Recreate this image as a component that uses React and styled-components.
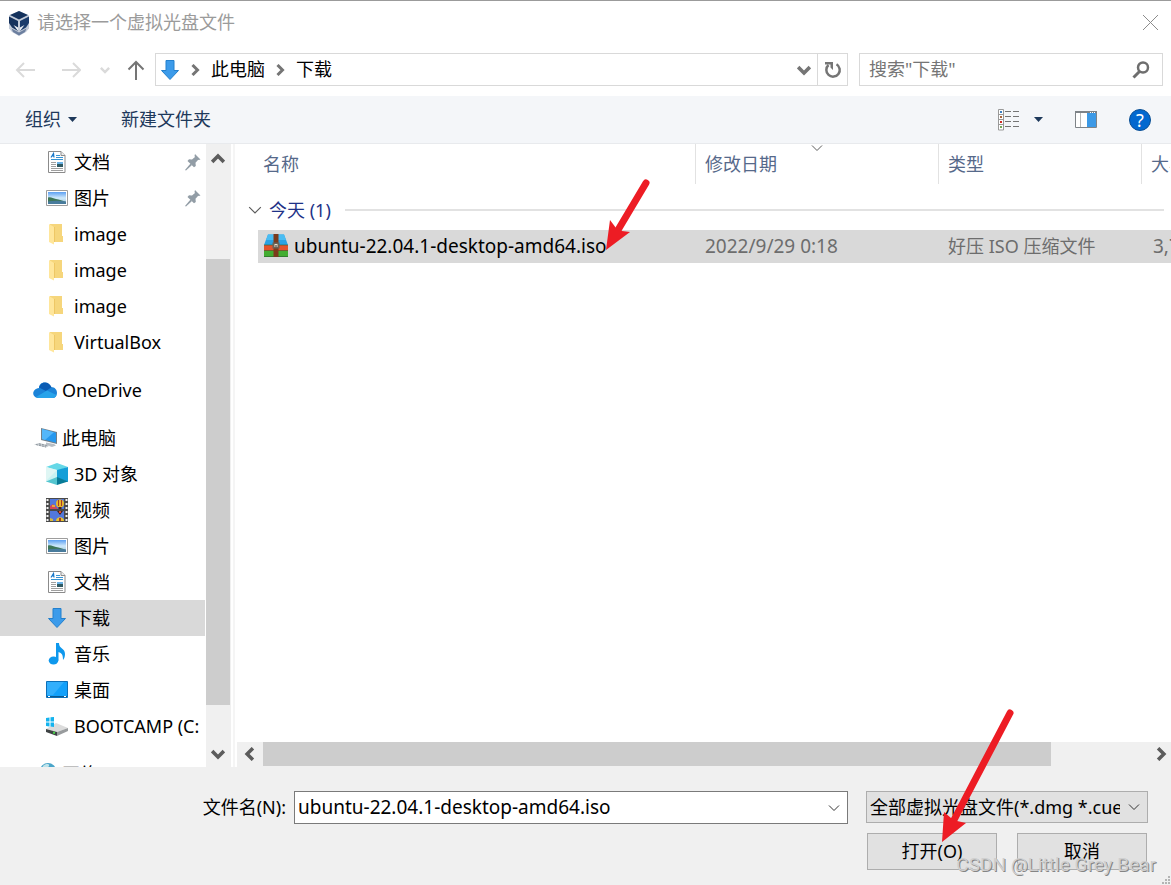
import React from "react";
import styled, { createGlobalStyle, css } from "styled-components";

const GlobalStyle = createGlobalStyle`
  *, *::before, *::after { box-sizing: border-box; }
  html, body { margin: 0; padding: 0; }
  body, button, input, select {
    font-family: "Noto Sans", "Noto Sans CJK SC", sans-serif;
    font-size: 18px;
    line-height: 24px;
    color: #000;
  }
  button { border: 0; padding: 0; background: none; cursor: default; }
  svg { display: block; flex: none; }
`;

/* ---------- window frame ---------- */

const Window = styled.div`
  display: flex;
  flex-direction: column;
  height: 100vh;
  overflow: hidden;
  border-top: 1px solid #9b9b9b;
  background: #fff;
`;

const TitleBar = styled.header`
  display: flex;
  align-items: center;
  gap: 7px;
  height: 43px;
  padding: 0 12px 0 8px;
  flex: none;
`;

const Title = styled.h1`
  flex: 1;
  margin: 0;
  padding-bottom: 1px;
  font-size: 18px;
  font-weight: 400;
  color: #9b9b9b;
`;

const IconButton = styled.button`
  display: flex;
  align-items: center;
  justify-content: center;
  flex: none;
`;

/* ---------- navigation ---------- */

const NavBar = styled.nav`
  display: flex;
  align-items: center;
  padding: 9px 8px 10px 15px;
  flex: none;
`;

const History = styled.div`
  display: flex;
  align-items: center;
  width: 140px;
  flex: none;
`;

const HistoryButton = styled(IconButton)`
  width: ${(p) => p.$width}px;
  justify-content: flex-start;
`;

const AddressBar = styled.div`
  display: flex;
  align-items: center;
  flex: 1;
  height: 33px;
  margin-right: 11px;
  padding-left: 2px;
  border: 1px solid #d9d9d9;
`;

const Crumb = styled.button`
  margin: 0 9px 0 10px;
  padding-bottom: 1px;
`;

const Place = styled(IconButton)`
  margin-right: 7px;
`;

const AddressDrop = styled(IconButton)`
  width: 27px;
  height: 31px;
  margin-left: auto;
`;

const Refresh = styled(IconButton)`
  width: 30px;
  height: 31px;
  border-left: 1px solid #d9d9d9;
`;

const SearchBox = styled.label`
  display: flex;
  align-items: center;
  width: 304px;
  height: 33px;
  padding: 0 12px 0 9px;
  border: 1px solid #d9d9d9;
`;

const SearchInput = styled.input`
  flex: 1;
  min-width: 0;
  padding: 0 0 1px;
  border: 0;
  outline: 0;
  background: none;
  &::placeholder { color: #757575; opacity: 1; }
`;

/* ---------- command bar ---------- */

const CommandBar = styled.div`
  display: flex;
  align-items: center;
  height: 48px;
  padding: 0 20px 0 25px;
  background: #f4f6f9;
  border-bottom: 1px solid #e8eaed;
  flex: none;
`;

const Command = styled.button`
  display: flex;
  align-items: center;
  gap: 7px;
  margin-right: 44px;
  padding-bottom: 1px;
  color: #1e395b;
`;

const ViewTools = styled.div`
  display: flex;
  align-items: center;
  margin-left: auto;
`;

const HelpButton = styled(IconButton)`
  width: 22px;
  height: 22px;
  margin-left: 32px;
  border: 1px solid #0a4f94;
  border-radius: 50%;
  background: #0268cf;
  color: #fff;
`;

const ViewButton = styled(IconButton)`
  gap: 14px;
  margin-right: 32px;
`;

/* ---------- body ---------- */

const Body = styled.div`
  display: flex;
  flex: 1;
  min-height: 0;
`;

const Tree = styled.ul`
  width: 206px;
  margin: 0;
  padding: 0;
  overflow: hidden;
  list-style: none;
  flex: none;
`;

const TreeRow = styled.li`
  display: flex;
  align-items: center;
  gap: 5px;
  height: 36px;
  margin-top: ${(p) => (p.$root ? 12 : 0)}px;
  margin-right: 1px;
  padding-left: ${(p) => (p.$root ? 33 : 45)}px;
  padding-right: 4px;
  white-space: nowrap;
  ${(p) => p.$selected && css`background: #d9d9d9;`}
`;

const TreeLabel = styled.span`
  flex: 1;
`;

const ScrollTrack = styled.div`
  display: flex;
  background: #f0f0f0;
  flex: none;
  ${(p) =>
    p.$horizontal
      ? css`
          height: 25px;
          border-bottom: 1px solid #f0f0f0;
        `
      : css`
          flex-direction: column;
          width: 25px;
          border-right: 1px solid #f0f0f0;
        `}
`;

const ScrollButton = styled(IconButton)`
  width: ${(p) => (p.$horizontal ? `${p.$length}px` : "auto")};
  height: ${(p) => (p.$horizontal ? "auto" : `${p.$length}px`)};
`;

const ScrollSpace = styled.div`
  flex: ${(p) => p.$grow} 1 0;
  background: ${(p) => (p.$thumb ? "#cdcdcd" : "transparent")};
`;

const Splitter = styled.div`
  width: 6px;
  border-left: 2px solid #fff;
  border-right: 2px solid #fff;
  background: #f5f5f5;
  flex: none;
`;

const FilePane = styled.main`
  display: flex;
  flex-direction: column;
  flex: 1;
  min-width: 0;
`;

const FileArea = styled.div`
  flex: 1;
  min-height: 0;
  overflow: hidden;
`;

const FileTable = styled.table`
  width: 100%;
  table-layout: fixed;
  border-collapse: separate;
  border-spacing: 0;
`;

const Col = styled.col`
  width: ${(p) => p.$width};
`;

const HeadCell = styled.th`
  position: relative;
  height: 40px;
  padding: 0 0 0 ${(p) => p.$pad || 9}px;
  overflow: hidden;
  border-right: 1px solid ${(p) => (p.$line ? "#e2e2e2" : "transparent")};
  text-align: left;
  white-space: nowrap;
  font-weight: 400;
  color: #56698a;
`;

const SortMark = styled.span`
  position: absolute;
  top: -2px;
  left: 50%;
  margin-left: -6px;
`;

const GroupCell = styled.th`
  height: 46px;
  padding: 5px 7px 0 11px;
  text-align: left;
  font-weight: 400;
  color: #1e3287;
`;

const GroupTitle = styled.div`
  display: flex;
  align-items: center;
  gap: 7px;
  &::after {
    content: "";
    flex: 1;
    height: 2px;
    margin-left: 7px;
    background: #e2e2e2;
  }
`;

const Cell = styled.td`
  height: 33px;
  padding: 0 0 1px ${(p) => p.$pad || 9}px;
  overflow: ${(p) => (p.$main ? "visible" : "hidden")};
  background: #d9d9d9;
  white-space: nowrap;
  font-size: ${(p) => (p.$wide ? 19 : 18)}px;
  color: ${(p) => (p.$main ? "#000" : "#6d6d6d")};
`;

const Gutter = styled.td`
  padding: 0;
`;

const FileName = styled.span`
  position: relative;
  display: inline-flex;
  align-items: center;
  gap: 5px;
  vertical-align: top;
  height: 32px;
`;

const RowArrow = styled.svg`
  position: absolute;
  left: 340px;
  top: -56px;
  pointer-events: none;
`;

/* ---------- footer ---------- */

const Footer = styled.form`
  position: relative;
  display: flex;
  flex-direction: column;
  gap: 9px;
  height: 118px;
  padding: 24px 23px 0 0;
  background: #f0f0f0;
  flex: none;
`;

const FieldRow = styled.div`
  display: flex;
  align-items: flex-start;
`;

const FieldLabel = styled.label`
  width: 294px;
  padding-right: 8px;
  line-height: 33px;
  text-align: right;
  flex: none;
`;

const NameField = styled.div`
  display: flex;
  flex: 1;
  height: 33px;
  margin-right: 18px;
  border: 1px solid #7a7a7a;
  background: #fff;
`;

const NameInput = styled.input`
  flex: 1;
  min-width: 0;
  padding: 0 0 2px 3px;
  border: 0;
  outline: 0;
  background: none;
  font-size: 19px;
`;

const DropButton = styled(IconButton)`
  width: 26px;
`;

const TypeField = styled.div`
  position: relative;
  width: 282px;
`;

const TypeSelect = styled.select`
  display: block;
  width: 100%;
  height: 32px;
  padding: 0 27px 0 3px;
  border: 1px solid #adadad;
  border-radius: 0;
  background: #e1e1e1;
  appearance: none;
  overflow: hidden;
`;

const TypeMark = styled.span`
  position: absolute;
  top: 10px;
  right: 8px;
  pointer-events: none;
`;

const Actions = styled.div`
  display: flex;
  justify-content: flex-end;
  gap: 20px;
  padding-right: 1px;
`;

const ActionButton = styled.button`
  width: 130px;
  height: 37px;
  padding-bottom: 1px;
  border: 1px solid #adadad;
  background: #e1e1e1;
`;

const OpenArrow = styled.svg`
  position: absolute;
  right: 151px;
  top: -62px;
  pointer-events: none;
`;

const Watermark = styled.span`
  position: absolute;
  right: 15px;
  bottom: 8px;
  font-family: Roboto, "Liberation Sans", sans-serif;
  font-size: 19px;
  color: #cfcfcf;
  text-shadow: 1px 1px 0 #858585;
  pointer-events: none;
`;

const Grip = styled.svg`
  position: absolute;
  right: 0;
  bottom: 0;
`;

/* ---------- icons ---------- */

const Chevron = ({ dir = "down", size = 12, width = 2, color = "#5c5c5c" }) => {
  const paths = {
    down: "M1 3.5 6 8.5 11 3.5",
    up: "M1 8.5 6 3.5 11 8.5",
    left: "M8.5 1 3.5 6 8.5 11",
    right: "M3.5 1 8.5 6 3.5 11",
  };
  return (
    <svg width={size} height={size} viewBox="0 0 12 12" fill="none" stroke={color} strokeWidth={width}>
      <path d={paths[dir]} />
    </svg>
  );
};

const Caret = () => (
  <svg width="9" height="5" viewBox="0 0 9 5"><path d="M0 0h9L4.500 5z" fill="#1e395b" /></svg>
);

const AppLogo = () => (
  <svg width="22" height="26" viewBox="0 0 22 26">
    <path d="M1 5.500v13L4 22l7 4 7-4 3-3.500v-13L11 1z" fill="#c3cbd8" />
    <path d="M11 1 20 5 11 9.500 2 5z" fill="#14315c" />
    <path d="M1 6.500 10 11v10L4 17.500 1 13z" fill="#14315c" />
    <path d="M21 6.500 12 11v10l6-3.500L21 13z" fill="#1b3c6c" />
    <path d="M3.500 18.500 11 22.500l7.500-4-1.500 3.500-6 3.500L5 22z" fill="#6c7f9f" />
    <path d="M5.500 15 10 17.500V21zM16.500 15 12 17.500V21z" fill="#eef1f6" />
  </svg>
);

const NavArrow = ({ color, dir }) => (
  <svg width="20" height="20" viewBox="0 0 20 20" fill="none" stroke={color} strokeWidth="2">
    {dir === "left" && <path d="M20 10H2M9 3 2 10l7 7" />}
    {dir === "right" && <path d="M1 10h18M12 3l7 7-7 7" />}
    {dir === "up" && <path d="M9 20V2M1.500 9.500 9 2l7.500 7.500" />}
  </svg>
);

const DownloadIcon = () => (
  <svg width="24" height="24" viewBox="0 0 24 24">
    <path d="M8 2.500h8v10h4.500L12 21.500 3.500 12.500H8z" fill="#3c9bea" stroke="#2380cd" />
  </svg>
);

const DocumentIcon = () => (
  <svg width="24" height="24" viewBox="0 0 24 24">
    <path d="M3.500 1.500h12.500l4 4v17h-16.500z" fill="#fff" stroke="#8b8b8b" />
    <path d="M16 1.500v4h4" fill="#eee" stroke="#8b8b8b" />
    <path d="M6 7.500 8.500 3.500l.5 4M7 6h2" stroke="#1979c9" strokeWidth="1.200" fill="none" />
    <path d="M11 5.500h4M11 7.500h7M6 9.500h12" stroke="#3793d3" />
    <path d="M6 12.500h5M6 14.500h5M6 16.500h5M6 18.500h12M6 20.500h12" stroke="#a0a0a0" />
    <path d="M12 12h6v5h-6z" fill="#6ab2e6" />
    <path d="M12 14h6v3h-6z" fill="#315a62" />
  </svg>
);

const PictureIcon = () => (
  <svg width="24" height="24" viewBox="0 0 24 24">
    <defs>
      <linearGradient id="sky" x2="0" y2="1">
        <stop offset="0" stopColor="#5b9ff2" />
        <stop offset=".5" stopColor="#cfe9fb" />
        <stop offset="1" stopColor="#9cc4dc" />
      </linearGradient>
    </defs>
    <path d="M1.500 4.500h21v15h-21z" fill="#fff" stroke="#9d9d9d" />
    <path d="M3 6h18v12H3z" fill="url(#sky)" />
    <path d="M3 11.500c3-1 5 1 8 1.500s7 2 10 2.500c-5 .5-12 0-18 .500z" fill="#3e7658" />
    <path d="M3 15.500c6-1 12-1 18 0V18H3z" fill="#487b9c" />
  </svg>
);

const FolderIcon = () => (
  <svg width="24" height="24" viewBox="0 0 24 24">
    <path d="M5 2h12v12h1v6H5z" fill="#f6d67c" />
    <path d="M4 2l5 3v17.500L4 20z" fill="#ffe69b" />
    <path d="M9.500 5v15" stroke="#eec765" />
  </svg>
);

const CloudIcon = () => (
  <svg width="24" height="24" viewBox="0 0 24 24">
    <path d="M6 10c0-6 8-8 12-1 4 0 6 3 6 6s-2 5-4 5H5c-7-1-6-9 1-10z" fill="#1b83d8" />
    <path d="M6 9.500C8 3 16 2.500 18.500 9.200L13 13z" fill="#0a5cb4" />
    <path d="M3 19 14 12.500 23.500 17c-1 2-2 3-4 3H6c-1 0-2-.4-3-1z" fill="#27a3ea" />
  </svg>
);

const ComputerIcon = () => (
  <svg width="24" height="24" viewBox="0 0 24 24">
    <path d="M8 2l16 4v12L8 14z" fill="#72808b" />
    <path d="M9 3l14 3.700v10L9 13z" fill="#2698ee" />
    <path d="M9 3l12 3.200L12 14l-3-1z" fill="#54b7fa" />
    <path d="M13 16.500 21 18l2 1.500-4 1.500-6-2z" fill="#b8bec4" />
    <path d="M1 18.500 6 17l11 2.500-4 2z" fill="#c8cdd1" />
    <path d="M3 18.500 13 21M6 17.800l9 2" stroke="#8e979e" strokeDasharray="2 1" />
  </svg>
);

const CubeIcon = () => (
  <svg width="24" height="24" viewBox="0 0 24 24">
    <path d="M12 1 23 5 12 9 1 5z" fill="#65d8e7" />
    <path d="M1 5l11 3v8L1 20z" fill="#c8f2f2" />
    <path d="M23 5 12 8v8l11 4z" fill="#159fd8" />
    <path d="M1 19.500 12 15v8z" fill="#54c5cf" />
    <path d="M23 19.500 12 15v8z" fill="#087b97" />
    <path d="M1 5 12 8 1 19z" fill="#dff6f4" />
  </svg>
);

const FilmIcon = () => (
  <svg width="24" height="24" viewBox="0 0 24 24">
    <path d="M1 0h22v24H1z" fill="#4a4a4a" />
    <path d="M2.500 1v22M21.500 1v22" stroke="#f1f1f1" strokeWidth="2" strokeDasharray="2 2" />
    <path d="M5 1h14v10H5zM5 13h14v10H5z" fill="#5278dc" />
    <path d="M5 8l3-2 5 5H5z" fill="#d1475a" />
    <path d="M7 7h3v2H7z" fill="#e9a43a" />
    <circle cx="15" cy="5.500" r="4" fill="#e7b72b" />
    <path d="M13 2h1v6h-1zM16 2h1v6h-1z" fill="#a83b28" />
    <path d="M13.500 9h3v2h-3zM12 13h6l-3 4z" fill="#4a2216" />
    <path d="M14 13h2v2h-2z" fill="#e04a2b" />
    <path d="M11 23c0-5 8-5 8 0z" fill="#e9c32c" />
    <path d="M14 20h2v3h-2z" fill="#a83b28" />
    <path d="M5 20l3 1v2H5z" fill="#d8b93c" />
  </svg>
);

const MusicIcon = () => (
  <svg width="24" height="24" viewBox="0 0 24 24" fill="#0e98ed">
    <ellipse cx="8.500" cy="18.500" rx="4.800" ry="4" />
    <path d="M11 1h3c0 6 6 5 6 11 0 3-1 5-2 6 0-5-1-7-4.500-8v8.500H11z" />
  </svg>
);

const DesktopIcon = () => (
  <svg width="24" height="24" viewBox="0 0 24 24">
    <path d="M1.500 3.500h21v16h-21z" fill="#12a0fa" stroke="#0c6fb8" />
    <path d="M2 4h17L8 17H2z" fill="#33affc" />
    <path d="M2 18.500h20" stroke="#0b598f" />
    <path d="M3 18.500h2M19 18.500h2" stroke="#fff" />
  </svg>
);

const DriveIcon = () => (
  <svg width="24" height="24" viewBox="0 0 24 24">
    <path d="M1 15 11 9l12 5-11 4z" fill="#dcdcdc" />
    <path d="M1 15l11 3v4L1 18z" fill="#3e4244" />
    <path d="M12 18l11-4v3l-11 5z" fill="#989b9d" />
    <path d="M8 18.500l2 .5" stroke="#49d749" strokeWidth="2" />
    <path d="M1 4l3.500-.5V7.500H1zM5.500 3.300 9 3v4.500H5.500zM1 8.500h3.500v4L1 12zM5.500 8.500H9V13l-3.500-.4z" fill="#14b3ee" />
  </svg>
);

const NetworkIcon = () => (
  <svg width="24" height="24" viewBox="0 0 24 24">
    <circle cx="15" cy="9" r="8" fill="#4aa5c9" />
    <path d="M10 4c3-3 7-2 6 0s-4 2-4 4-3 0-3-1z" fill="#bfe3ea" />
    <path d="M1 12h13v9H1z" fill="#2c8ed6" />
  </svg>
);

const PinIcon = () => (
  <svg width="16" height="17" viewBox="0 0 16 17" fill="#929da6">
    <path d="M10 0l5.500 5.500-1.700.6-.6-.3-2.700 3 .3 3.200-1.800 1.300L2.500 7l1.500-1.700 3 .3L10 3l-.5-1z" />
    <path d="M5.500 9.500 0 16l1 .500 6-5.500z" />
  </svg>
);

const ArchiveIcon = () => (
  <svg width="26" height="26" viewBox="0 0 26 26">
    <path d="M1 12 5 1.500h16L25 12z" fill="#2ba3e3" />
    <path d="M3 7 5 1.500h16L23 7z" fill="#4abcf2" />
    <path d="M1 12h24v6H1z" fill="#e4532b" />
    <path d="M1 18h24v6H1z" fill="#43ad31" />
    <path d="M1 17.500h24M1 12h24M1 23.500h24" stroke="#29602f" strokeOpacity=".6" />
    <path d="M10.500 1h5v23h-5z" fill="#7c3b1c" />
    <path d="M9.500 9.500h7v6h-7z" fill="#6a6357" />
    <path d="M11.500 11h3v3h-3z" fill="#e9e0cb" />
    <path d="M13 12v2" stroke="#333" />
  </svg>
);

const RefreshIcon = () => (
  <svg width="18" height="18" viewBox="0 0 18 18" fill="none" stroke="#757575">
    <path d="M12.500 3.200A6.700 6.700 0 1 1 4.500 4" strokeWidth="2.500" />
    <path d="M1 1h8v8l-2.500-2.500V3.500H1z" fill="#757575" stroke="none" />
  </svg>
);

const SearchIcon = () => (
  <svg width="18" height="18" viewBox="0 0 18 18" fill="none" stroke="#6e6e6e">
    <circle cx="11" cy="6.500" r="5" strokeWidth="2.500" />
    <path d="M7.500 10.500 1.500 16.500" strokeWidth="3" />
  </svg>
);

const ListIcon = () => (
  <svg width="22" height="22" viewBox="0 0 22 22">
    <path d="M.5 .5h5v20.500h-5zM.5 5.500h5M.5 10.500h5M.5 15.500h5" fill="#fff" stroke="#999" />
    <path d="M2 2h2v2H2z" fill="#3b7fc1" />
    <path d="M2 7h2v2H2z" fill="#a8643b" />
    <path d="M2 12h2v2H2z" fill="#cf2b22" />
    <path d="M2 17h2v2H2z" fill="#75a857" />
    <path d="M7 2.500h15M7 7.500h15M7 12.500h15M7 17.500h15" stroke="#757575" strokeDasharray="6 2" />
  </svg>
);

const PaneIcon = () => (
  <svg width="22" height="17" viewBox="0 0 22 17">
    <path d="M.5 .5h21v16H.5z" fill="#fff" stroke="#7e8388" />
    <path d="M0 0h22v2H0z" fill="#7e8388" />
    <path d="M5.500 2v14" stroke="#b6b6b6" />
    <path d="M12 2h9v14h-9z" fill="#3c99e6" />
    <path d="M15 1.500h5" stroke="#fff" strokeDasharray="1 1" />
  </svg>
);

const places = [
  { label: "文档", icon: DocumentIcon, pinned: true },
  { label: "图片", icon: PictureIcon, pinned: true },
  { label: "image", icon: FolderIcon },
  { label: "image", icon: FolderIcon },
  { label: "image", icon: FolderIcon },
  { label: "VirtualBox", icon: FolderIcon },
  { label: "OneDrive", icon: CloudIcon, root: true },
  { label: "此电脑", icon: ComputerIcon, root: true },
  { label: "3D 对象", icon: CubeIcon },
  { label: "视频", icon: FilmIcon },
  { label: "图片", icon: PictureIcon },
  { label: "文档", icon: DocumentIcon },
  { label: "下载", icon: DownloadIcon, selected: true },
  { label: "音乐", icon: MusicIcon },
  { label: "桌面", icon: DesktopIcon },
  { label: "BOOTCAMP (C:", icon: DriveIcon },
  { label: "网络", icon: NetworkIcon, root: true },
];

export default function App() {
  return (
    <Window>
      <GlobalStyle />
      <TitleBar>
        <AppLogo />
        <Title>请选择一个虚拟光盘文件</Title>
        <IconButton aria-label="关闭">
          <svg width="17" height="17" viewBox="0 0 17 17" stroke="#8c8c8c">
            <path d="M1 1l15 15M16 1 1 16" />
          </svg>
        </IconButton>
      </TitleBar>

      <NavBar>
        <History>
          <HistoryButton $width={46} aria-label="后退"><NavArrow dir="left" color="#dadada" /></HistoryButton>
          <HistoryButton $width={39} aria-label="前进"><NavArrow dir="right" color="#dadada" /></HistoryButton>
          <HistoryButton $width={27} aria-label="最近位置"><Chevron size={10} width={3} color="#dadada" /></HistoryButton>
          <HistoryButton $width={20} aria-label="上移"><NavArrow dir="up" color="#757575" /></HistoryButton>
        </History>
        <AddressBar>
          <Place aria-label="位置"><DownloadIcon /></Place>
          <Chevron dir="right" width={3} color="#757575" />
          <Crumb>此电脑</Crumb>
          <Chevron dir="right" width={3} color="#757575" />
          <Crumb>下载</Crumb>
          <AddressDrop aria-label="以前的位置"><Chevron size={14} width={3} color="#757575" /></AddressDrop>
          <Refresh aria-label="刷新"><RefreshIcon /></Refresh>
        </AddressBar>
        <SearchBox>
          <SearchInput type="text" aria-label="搜索" placeholder={'搜索"下载"'} />
          <SearchIcon />
        </SearchBox>
      </NavBar>

      <CommandBar>
        <Command>组织 <Caret /></Command>
        <Command>新建文件夹</Command>
        <ViewTools>
          <ViewButton aria-label="更改视图"><ListIcon /><Caret /></ViewButton>
          <IconButton aria-label="预览窗格"><PaneIcon /></IconButton>
          <HelpButton>?</HelpButton>
        </ViewTools>
      </CommandBar>

      <Body>
        <Tree>
          {places.map(({ label, icon: Icon, root, selected, pinned }, i) => (
            <TreeRow key={i} $root={root} $selected={selected}>
              <Icon />
              <TreeLabel>{label}</TreeLabel>
              {pinned && <PinIcon />}
            </TreeRow>
          ))}
        </Tree>
        <ScrollTrack>
          <ScrollButton $length={30} aria-label="向上滚动"><Chevron dir="up" size={14} width={3} /></ScrollButton>
          <ScrollSpace $grow={85} />
          <ScrollSpace $grow={446} $thumb />
          <ScrollSpace $grow={36} />
          <ScrollButton $length={26} aria-label="向下滚动"><Chevron size={14} width={3} /></ScrollButton>
        </ScrollTrack>
        <Splitter />
        <FilePane>
          <FileArea>
            <FileTable>
              <colgroup>
                <Col $width="21px" />
                <Col $width="438px" />
                <Col $width="243px" />
                <Col $width="203px" />
                <Col $width="auto" />
              </colgroup>
              <thead>
                <tr>
                  <Gutter />
                  <HeadCell $pad={5} $line>名称</HeadCell>
                  <HeadCell $line>修改日期<SortMark><Chevron width={1} /></SortMark></HeadCell>
                  <HeadCell $line>类型</HeadCell>
                  <HeadCell>大小</HeadCell>
                </tr>
              </thead>
              <tbody>
                <tr>
                  <GroupCell colSpan={5} scope="rowgroup">
                    <GroupTitle><Chevron size={14} width={1} />今天 (1)</GroupTitle>
                  </GroupCell>
                </tr>
                <tr>
                  <Gutter />
                  <Cell $pad={5} $main $wide>
                    <FileName>
                      <ArchiveIcon />
                      ubuntu-22.04.1-desktop-amd64.iso
                      <RowArrow width="50" height="80" viewBox="603 174 50 80">
                        <path d="M646 183 618 230" stroke="#ed1c24" strokeWidth="7" strokeLinecap="round" />
                        <path d="M606 250 610 220 616 228 622 231 630 232z" fill="#ed1c24" />
                      </RowArrow>
                    </FileName>
                  </Cell>
                  <Cell $wide>2022/9/29 0:18</Cell>
                  <Cell>好压 ISO 压缩文件</Cell>
                  <Cell $pad={11} $wide>3,7</Cell>
                </tr>
              </tbody>
            </FileTable>
          </FileArea>
          <ScrollTrack $horizontal>
            <ScrollButton $horizontal $length={26} aria-label="向左滚动"><Chevron dir="left" size={14} width={3} /></ScrollButton>
            <ScrollSpace $grow={788} $thumb />
            <ScrollSpace $grow={100} />
            <ScrollButton $horizontal $length={20} aria-label="向右滚动"><Chevron dir="right" size={14} width={3} /></ScrollButton>
          </ScrollTrack>
        </FilePane>
      </Body>

      <Footer onSubmit={(e) => e.preventDefault()}>
        <FieldRow>
          <FieldLabel htmlFor="file-name">文件名(N):</FieldLabel>
          <NameField>
            <NameInput id="file-name" type="text" defaultValue="ubuntu-22.04.1-desktop-amd64.iso" />
            <DropButton type="button" aria-label="最近的文件名"><Chevron width={1} color="#333" /></DropButton>
          </NameField>
          <TypeField>
            <TypeSelect aria-label="文件类型">
              <option>全部虚拟光盘文件(*.dmg *.cue</option>
            </TypeSelect>
            <TypeMark><Chevron width={1} color="#333" /></TypeMark>
          </TypeField>
        </FieldRow>
        <Actions>
          <ActionButton type="submit">打开(O)</ActionButton>
          <ActionButton type="button">取消</ActionButton>
        </Actions>
        <OpenArrow width="80" height="140" viewBox="940 705 80 140">
          <path d="M1010 713 954 820" stroke="#ed1c24" strokeWidth="7" strokeLinecap="round" />
          <path d="M942 842 944 812 951 818 957 821 966 823z" fill="#ed1c24" />
        </OpenArrow>
        <Watermark>CSDN @Little Grey Bear</Watermark>
        <Grip width="9" height="9" viewBox="0 0 9 9" fill="#b4b4b4">
          <path d="M6 0h2v2H6zM3 3h2v2H3zM6 3h2v2H6zM0 6h2v2H0zM3 6h2v2H3zM6 6h2v2H6z" />
        </Grip>
      </Footer>
    </Window>
  );
}
